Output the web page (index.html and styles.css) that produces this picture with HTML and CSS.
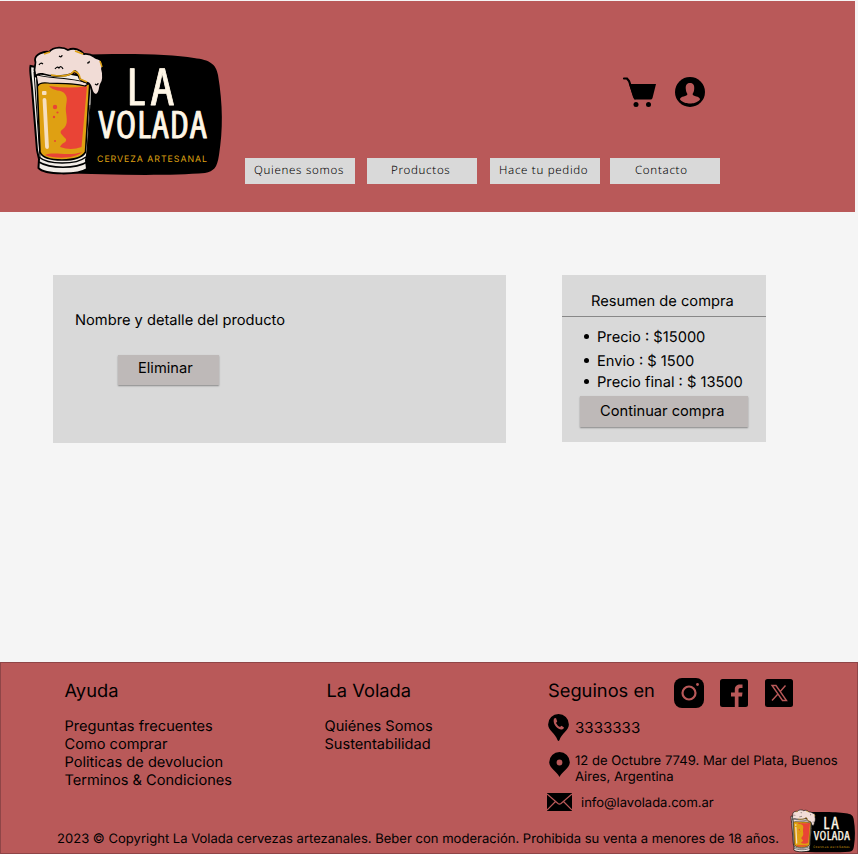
FILE: index.html
```html
<!DOCTYPE html>
<html lang="es">
<head>
<meta charset="utf-8">
<title>La Volada - Carrito</title>
<link rel="stylesheet" href="styles.css">
</head>
<body>
<header class="header">
  <svg class="logo" viewBox="28 45 196 132">
    <defs>
      <g id="logo-art">
        <path d="M78 55C125 53 170 54 194 58C210 60 216 64 218 75C223 105 223 130 219 155C217 168 214 171 205 173C170 176 110 175 60 173Z" fill="#000"/>
        <path d="M30.500 66C29.500 70 31 77 32 88L37 150L39 159L38.500 168C45 175 78 175 87 169L86 160L88 150L91.500 103L92 78Z" fill="#f3ede7" stroke="#000" stroke-width="2"/>
        <path d="M34 72L40 157M90 105L87 154" fill="none" stroke="#000" stroke-width="1"/>
        <path d="M37 80Q65 86 90 80L85.500 152Q81 160 62 160Q43 160 40 152Z" fill="#dfa012" stroke="#000" stroke-width="1.600"/>
        <path d="M49 86Q70 89 87 86L81.500 147Q71 151 60 147C62 142 67 143 66 139C60 133 59 132 63 129C68 125 67 120 66 112C65 104 69 99 65 94C62 89 53 92 49 86Z" fill="#e94436"/>
        <path d="M45 155C54 151 68 157 82 152C75 159 55 159 45 155Z" fill="#e94436"/>
        <circle cx="55" cy="107" r="2.200" fill="#e94436"/><circle cx="57.500" cy="112.500" r="1.100" fill="#e94436"/><circle cx="54" cy="117" r="1.200" fill="#e94436"/><circle cx="55" cy="141" r="1" fill="#e94436"/>
        <path d="M44.500 100L47 147" stroke="#f6dfc0" stroke-width="3.800" stroke-linecap="round"/><rect x="42" y="91" width="4.500" height="4" rx="1" fill="#f6dfc0"/>
        <path d="M39 157C48 165 76 165 86 157M39 162C50 169 76 169 87 162" fill="none" stroke="#000" stroke-width="1.500"/>
        <path d="M36 74C40 79 80 77 88 84L85 86C70 82 55 84 48 83Q39 82 38 86Z" fill="#f1dcd6" stroke="#000" stroke-width="1.200"/>
        <path d="M35 73C33 67 37 64 35 60C35 54 44 51 49 52C54 46 64 47 68 50C74 47 81 50 84 54C91 53 94 57 96 58C103 59 103 65 102 69C104 75 103 82 101 84C99 87 101 93 96 95C91 94 92 88 90 85C88 81 86 84 81 80C77 77 80 73 75 71C71 77 52 77 43 74Q37 73 35 77Z" fill="#f1dcd6" stroke="#000" stroke-width="1.800"/>
        <path d="M51 75Q69 78 74 71Q80 73 80 79L87 82M44 54L50 52M75 51L83 54M100 61L102 67" fill="none" stroke="#dfa012" stroke-width="1.500"/>
        <path d="M39 65q1.500-3 4-1M55 69q2-3 4-1q2-3 4 1M59 56q3 2 3-1M87 63q3 0 2-2M95 84q3 2 3-1" fill="none" stroke="#000" stroke-width="1.200"/>
        <text class="logo-word" x="126.500 151" y="104.500" font-size="51">LA</text>
        <text class="logo-word" x="98.500" y="138" font-size="37.500" textLength="108" lengthAdjust="spacing">VOLADA</text>
        <text class="logo-tag" x="97" y="161.700" font-size="8.800" textLength="110">CERVEZA ARTESANAL</text>
      </g>
    </defs>
    <use href="#logo-art"/>
  </svg>
  <div class="header-main">
    <div class="actions">
      <svg class="cart" viewBox="0 0 34 32"><path d="M2 2.500H5L7 5L13 22.500" fill="none" stroke="#000" stroke-width="2.200" stroke-linecap="round"/><path d="M7 8H34L30.500 22Q30 23.500 28.500 23.500H14Q12 23.500 11 21Z"/><circle cx="14" cy="28.500" r="2.500"/><circle cx="26.500" cy="28.500" r="2.500"/></svg>
      <svg class="user" viewBox="0 0 30 30"><circle cx="15" cy="15" r="15"/><path d="M15 6C18.500 6 19.500 8.500 19.200 12C19 15 18 16 17.600 17C17.500 20 25 18.500 25 22.500C22 26 18 26.500 15 26.500S8 26 5 22.500C5 18.500 12.500 20 12.400 17C12 16 11 15 10.800 12C10.500 8.500 11.500 6 15 6Z" fill="#b95959"/></svg>
    </div>
    <nav class="nav">
      <a class="n1">Quienes somos</a><a class="n2">Productos</a><a class="n3">Hace tu pedido</a><a class="n4">Contacto</a>
    </nav>
  </div>
</header>
<main class="main">
  <section class="product">
    <p>Nombre y detalle del producto</p>
    <button class="btn remove">Eliminar</button>
  </section>
  <aside class="summary">
    <h2>Resumen de compra</h2>
    <ul>
      <li class="price">Precio : $15000</li>
      <li class="shipping">Envio : $ 1500</li>
      <li class="total">Precio final : $ 13500</li>
    </ul>
    <button class="btn continue">Continuar compra</button>
  </aside>
</main>
<footer class="footer">
  <div class="columns">
    <section class="help">
      <h3>Ayuda</h3>
      <p>Preguntas frecuentes</p><p>Como comprar</p><p>Politicas de devolucion</p><p>Terminos &amp; Condiciones</p>
    </section>
    <section class="about">
      <h3>La Volada</h3>
      <p>Quiénes Somos</p><p>Sustentabilidad</p>
    </section>
    <section class="contact">
      <div class="social">
        <h3>Seguinos en</h3>
        <svg class="insta" viewBox="0 0 30 30"><rect width="30" height="30" rx="8"/><circle cx="15" cy="15" r="6.500" fill="none" stroke="#b95959" stroke-width="2.200"/><circle cx="23.500" cy="6.500" r="1.400" fill="#b95959"/></svg>
        <svg class="fb" viewBox="0 0 28 28"><rect width="28" height="28" rx="2.500"/><path d="M14.800 28V17.500H11V13.500H14.800V10.500C14.800 7 17 5.500 20 5.500H22.500V9H20.500C19 9 18.500 9.800 18.500 11V13.500H22.500L22 17.500H18.500V28Z" fill="#b95959"/></svg>
        <svg class="x" viewBox="0 0 28 28"><rect width="28" height="28" rx="2.500"/><path d="M7 6.500H11L21.500 21.500H17.500Z M20.500 6.500L14.800 13M12.500 15.500L7 21.500" fill="none" stroke="#b95959" stroke-width="1.400"/></svg>
      </div>
      <div class="row phone">
        <svg viewBox="0 0 21 27"><path d="M10.500 0A10.400 10.400 0 0 1 20.900 10.400C20.900 16 13.500 19.500 11.500 26Q10.500 28 9.500 26C7.500 19.500.1 16 .1 10.400A10.400 10.400 0 0 1 10.500 0Z"/><path d="M6 4.500L8 4L9.200 7.500L8 9Q9.500 12 12 13L13.500 11.800L16 13.500Q15.500 16 13 15.500C8 14.500 4.500 9 6 4.500Z" fill="#b95959"/></svg>
        <span>3333333</span>
      </div>
      <div class="row address">
        <svg viewBox="0 0 21 25"><path d="M10.500 0A10.300 10.300 0 0 1 20.800 10.300C20.800 16 13 20 10.500 25C8 20 .2 16 .2 10.300A10.300 10.300 0 0 1 10.500 0Z"/><circle cx="10.500" cy="10.500" r="2.900" fill="#b95959"/></svg>
        <span>12 de Octubre 7749. Mar del Plata, Buenos<br>Aires, Argentina</span>
      </div>
      <div class="row mail">
        <svg viewBox="0 0 25 18"><rect width="25" height="18"/><path d="M0 1L11 10.500Q12.500 11.700 14 10.500L25 1M0 17L8.500 8.500M25 17L16.500 8.500" fill="none" stroke="#b95959" stroke-width="1.200"/></svg>
        <span>info@lavolada.com.ar</span>
      </div>
    </section>
  </div>
  <div class="bottom">
    <p>2023 © Copyright La Volada cervezas artezanales. Beber con moderación. Prohibida su venta a menores de 18 años.</p>
    <svg class="mini-logo" viewBox="28 45 196 132"><use href="#logo-art"/></svg>
  </div>
</footer>
</body>
</html>
```
FILE: styles.css
```css
* { box-sizing: border-box; }
body { margin: 0; height: 854px; overflow: hidden; display: flex; flex-direction: column; background: #f5f5f5; color: #000; font: 14.67px/18px Inter, sans-serif; text-rendering: geometricPrecision; }
h2, h3, p, ul { margin: 0; padding: 0; font-weight: 400; white-space: nowrap; }
svg { display: block; flex: none; }
.header { display: flex; width: 855px; height: 211.4px; margin-top: 1px; background: #b95959; }
.logo { width: 196px; height: 132px; margin: 44px 0 0 28px; }
.logo-word { font-family: "Open Sans", "Noto Sans", sans-serif; font-stretch: 75%; font-weight: 500; fill: #fff6e6; stroke: #fff6e6; stroke-width: .8; stroke-linejoin: round; }
.logo-tag { font-family: Inter, sans-serif; fill: #dfa012; }
.header-main { margin-left: 21px; }
.actions { display: flex; margin: 76px 0 0 377px; height: 32px; }
.cart { width: 34px; height: 32px; margin-top: -1px; }
.user { width: 30px; height: 30px; margin-left: 19px; }
.nav { display: flex; margin-top: 49px; font: 350 11.5px/26px "Noto Sans", sans-serif; letter-spacing: .7px; }
.nav a { width: 110px; height: 26.4px; background: #d9d9d9; white-space: nowrap; }
.n1 { padding-left: 9px; }
.n2 { margin-left: 12px; padding-left: 24px; }
.n3 { margin-left: 13px; padding-left: 9px; }
.n4 { margin-left: 10px; padding-left: 25px; }
.main { display: flex; height: 449.6px; flex: none; padding: 62.6px 0 0 53px; }
.product { width: 453px; height: 168px; padding: 36px 0 0 22px; background: #d9d9d9; }
.btn { display: block; border: 0; background: #beb9b8; box-shadow: 0 1px 1.500px #888; font: inherit; text-align: left; white-space: nowrap; }
.remove { width: 101px; height: 30px; margin: 26px 0 0 43px; padding: 0 0 3px 20px; }
.summary { width: 204px; height: 167px; margin-left: 56px; background: #d9d9d9; }
.summary h2 { height: 42px; padding: 17px 0 0 29px; font: inherit; border-bottom: 1px solid #888; }
.summary ul { list-style: none; padding: 11px 0 0 22px; }
.summary li { display: flex; align-items: center; }
.summary li::before { content: ""; width: 5px; height: 5px; margin-right: 8px; border-radius: 50%; background: #000; }
.shipping { margin-top: 6px; }
.total { margin-top: 3px; }
.continue { width: 168px; height: 31px; margin: 5px 0 0 18px; padding: 0 0 1px 20px; }
.footer { width: 858px; height: 192px; flex: none; border: 1px solid #8f4547; background: #b95959; }
.columns { display: flex; height: 146px; }
.help { width: 260px; margin-left: 63.5px; }
.about { width: 223px; }
.help p, .about p { font-size: 14.6px; }
.about h3 { margin-left: 2px; }
h3 { margin: 17px 0 15px; font-size: 18.3px; line-height: 22px; }
.contact { width: 309px; margin-left: .5px; }
.social { display: flex; }
.social h3 { width: 126px; margin-bottom: 0; }
.insta { width: 30px; height: 30px; margin-top: 15px; }
.fb { width: 28px; height: 28px; margin: 16px 0 0 16px; }
.x { width: 28px; height: 28px; margin: 16px 0 0 17px; }
.row { display: flex; }
.phone { margin-top: 6px; font-size: 15.1px; }
.phone svg { width: 21px; height: 27px; }
.phone span { margin: 5px 0 0 6px; }
.address { margin-top: 11px; font-size: 13.1px; line-height: 16px; white-space: nowrap; }
.address svg { width: 21px; height: 25px; margin-left: 1px; }
.address span { margin: 1px 0 0 5px; }
.mail { margin: 8px 0 0 -1px; font-size: 13px; }
.mail svg { width: 25px; height: 18px; }
.mail span { margin: 1px 0 0 9px; }
.bottom { display: flex; padding-left: 56px; }
.bottom p { width: 733px; margin-top: 21px; font-size: 13.05px; }
.mini-logo { width: 66px; height: 44px; }
```
